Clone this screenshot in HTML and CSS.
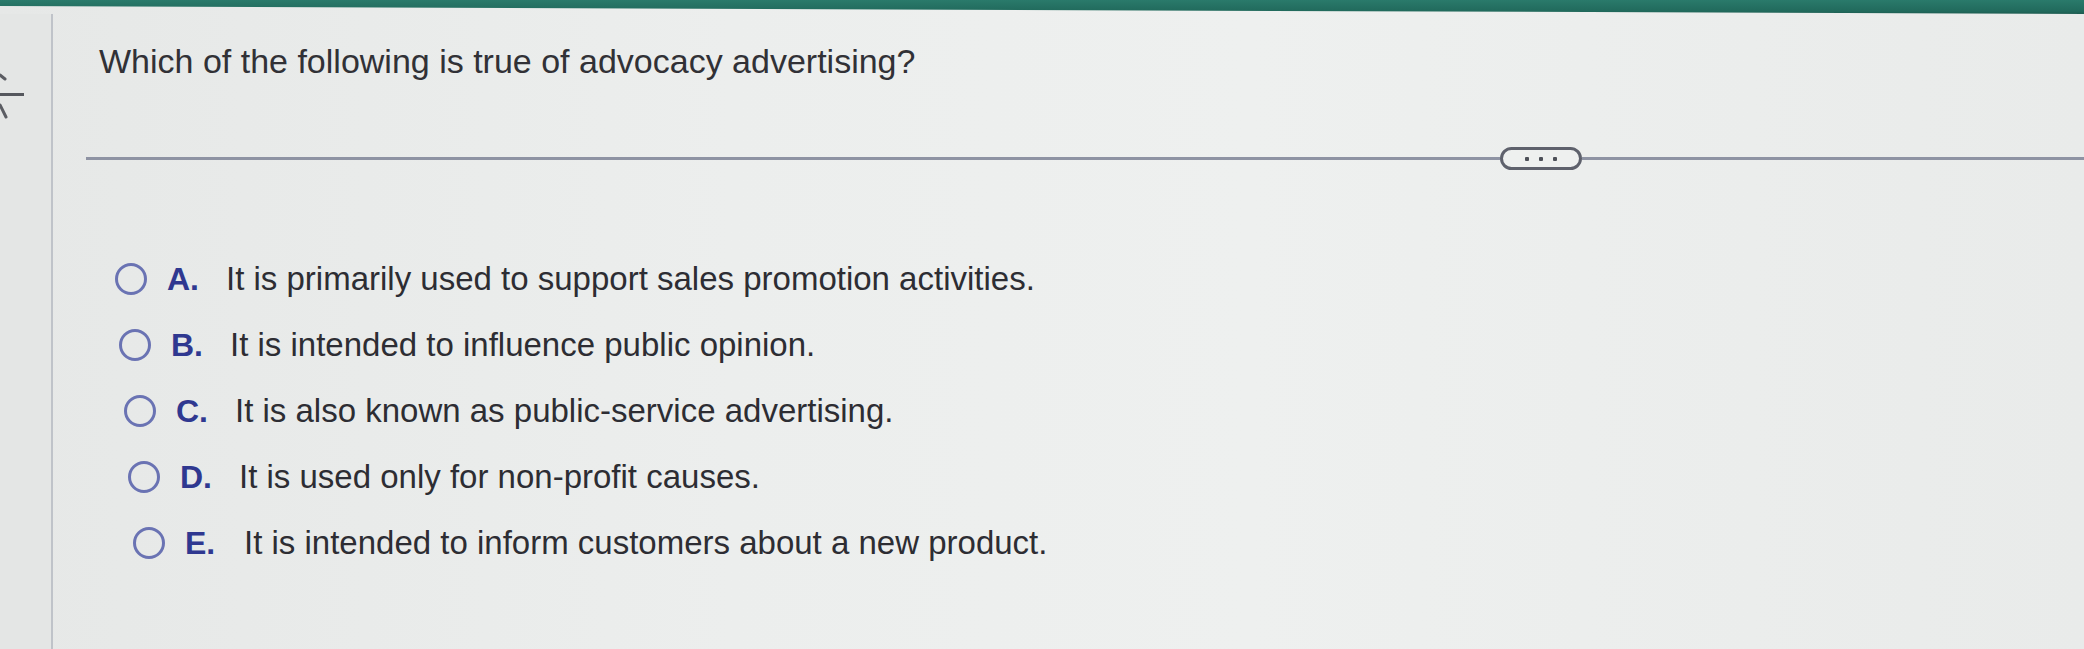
FILE: index.html
```html
<!DOCTYPE html>
<html lang="en">
<head>
<meta charset="utf-8">
<title>Question</title>
<link rel="stylesheet" href="styles.css">
</head>
<body>
<div class="topbar"></div>
<div class="main">
  <aside class="side">
    <svg class="side-glyph" width="30" height="60" viewBox="0 0 30 60" aria-hidden="true">
      <path d="M0 6 L5 10" stroke="#5b5d63" stroke-width="3" stroke-linecap="round"/>
      <rect x="0" y="24" width="24" height="3" fill="#55575d"/>
      <path d="M0 36 L6 48" stroke="#5b5d63" stroke-width="3" stroke-linecap="round"/>
    </svg>
  </aside>
  <section class="content">
    <h1 class="question">Which of the following is true of advocacy advertising?</h1>
    <div class="divider">
      <span class="seg seg-left"></span>
      <span class="pill"><i></i><i></i><i></i></span>
      <span class="seg seg-right"></span>
    </div>
    <ul class="options">
      <li class="opt"><span class="radio"></span><span class="letter">A.</span><span class="text">It is primarily used to support sales promotion activities.</span></li>
      <li class="opt"><span class="radio"></span><span class="letter">B.</span><span class="text">It is intended to influence public opinion.</span></li>
      <li class="opt"><span class="radio"></span><span class="letter">C.</span><span class="text">It is also known as public-service advertising.</span></li>
      <li class="opt"><span class="radio"></span><span class="letter">D.</span><span class="text">It is used only for non-profit causes.</span></li>
      <li class="opt"><span class="radio"></span><span class="letter">E.</span><span class="text">It is intended to inform customers about a new product.</span></li>
    </ul>
  </section>
</div>
</body>
</html>
```

FILE: styles.css
```css
html, body {
  margin: 0;
  padding: 0;
}
body {
  width: 2084px;
  height: 649px;
  overflow: hidden;
  font-family: "Liberation Sans", Arial, sans-serif;
  background: linear-gradient(90deg, #e6e8e7 0%, #eceeed 35%, #eef0ef 60%, #e9ebea 100%);
}
.topbar {
  height: 14px;
  background: linear-gradient(180deg, #2a7a6b 0%, #216a5c 80%, #1d5b50 100%);
  clip-path: polygon(0 0, 100% 0, 100% 14px, 0 6px);
}
.main {
  display: flex;
  height: 635px;
}
.side {
  width: 51px;
  border-right: 2px solid #bfc3c9;
  background: #e4e6e5;
  padding-top: 55px;
  box-sizing: content-box;
}
.side-glyph {
  display: block;
}
.content {
  flex: 1;
}
.question {
  margin: 27px 0 0 46px;
  font-size: 34px;
  line-height: 40px;
  font-weight: normal;
  color: #313136;
}
.divider {
  display: flex;
  align-items: center;
  height: 23px;
  margin: 66px 0 0 33px;
}
.seg {
  height: 3px;
  background: #8e93a3;
}
.seg-left {
  width: 1414px;
}
.seg-right {
  flex: 1;
}
.pill {
  width: 82px;
  height: 23px;
  box-sizing: border-box;
  border: 3px solid #5e616c;
  border-radius: 12px;
  display: flex;
  align-items: center;
  justify-content: center;
  gap: 10px;
  background: #eef0ef;
}
.pill i {
  width: 4px;
  height: 4px;
  background: #4d5058;
  border-radius: 1px;
}
.options {
  list-style: none;
  margin: 76px 0 0 62px;
  padding: 0;
}
.opt {
  display: flex;
  align-items: center;
  height: 66px;
}
.opt:nth-child(2) { padding-left: 4px; }
.opt:nth-child(3) { padding-left: 9px; }
.opt:nth-child(4) { padding-left: 13px; }
.opt:nth-child(5) { padding-left: 18px; }
.radio {
  width: 32px;
  height: 32px;
  box-sizing: border-box;
  border: 3px solid #6a73b3;
  border-radius: 50%;
  margin-right: 20px;
  flex: none;
}
.letter {
  width: 59px;
  font-size: 32px;
  font-weight: bold;
  color: #2f3890;
}
.text {
  font-size: 33px;
  color: #2d2d33;
  white-space: nowrap;
}
```
